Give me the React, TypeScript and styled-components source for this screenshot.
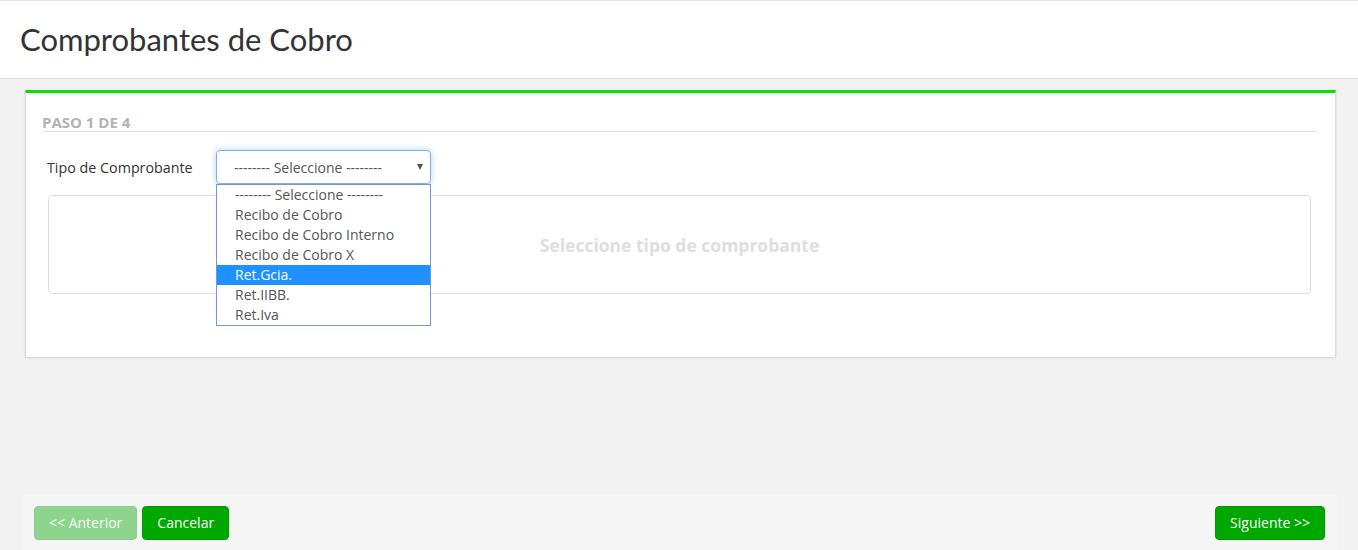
import React from 'react'
import styled, { createGlobalStyle } from 'styled-components'

const GlobalStyle = createGlobalStyle`
  html, body {
    margin: 0;
    padding: 0;
    background: #f2f2f2;
    font-family: "Open Sans", "Liberation Sans", sans-serif;
    color: #333;
  }
  * { box-sizing: border-box; }
`

const Page = styled.div`
  display: flex;
  flex-direction: column;
  min-height: 100vh;
`

const Header = styled.header`
  height: 79px;
  background: #fff;
  border-top: 1px solid #e6e6e6;
  border-bottom: 1px solid #e0e0e0;
  display: flex;
  align-items: center;
  padding: 0 20px;
`

const Title = styled.h1`
  margin: 0 0 1px;
  font-family: Lato, "Open Sans", sans-serif;
  font-weight: 400;
  font-size: 31px;
  color: #333;
`

const Card = styled.section`
  margin: 11px 22px 0 25px;
  background: #fff;
  border-top: 3px solid #00e400;
  border-left: 1px solid #dcdcdc;
  border-right: 1px solid #dcdcdc;
  box-shadow: 0 1px 2px rgba(0, 0, 0, 0.12);
  padding: 20px 17px 63px 16px;
`

const StepTitle = styled.h3`
  margin: 0;
  height: 19px;
  font-size: 15px;
  line-height: 18px;
  font-weight: 700;
  color: #b3b3b3;
  border-bottom: 1px solid #e5e5e5;
`

const Form = styled.div`
  padding: 18px 7px 0 6px;
`

const FieldRow = styled.div`
  display: flex;
  align-items: center;
  position: relative;
  z-index: 2;
`

const Label = styled.label`
  width: 169px;
  margin-left: -1px;
  font-size: 14.3px;
  color: #333;
`

const SelectWrap = styled.div`
  position: relative;
  width: 215px;
`

const SelectBox = styled.div`
  height: 34px;
  border: 1px solid #7fb2e6;
  border-radius: 4px;
  box-shadow: 0 0 6px rgba(102, 175, 233, 0.55);
  display: flex;
  align-items: center;
  justify-content: space-between;
  padding: 0 7px 0 17px;
  font-size: 14px;
  color: #555;
  background: #fff;
`

const Caret = styled.span`
  width: 0;
  height: 0;
  border-left: 3.5px solid transparent;
  border-right: 3.5px solid transparent;
  border-top: 6px solid #555;
  margin-top: -1px;
`

const OptionList = styled.ul`
  position: absolute;
  top: 100%;
  left: 0;
  width: 100%;
  margin: 0;
  padding: 0;
  list-style: none;
  background: #fff;
  border: 1px solid #6f98dc;
`

const Option = styled.li<{ active?: boolean }>`
  height: 20px;
  line-height: 20px;
  padding-left: 18px;
  font-size: 14px;
  color: ${({ active }) => (active ? '#fff' : '#555')};
  background: ${({ active }) => (active ? '#1e90ff' : 'transparent')};
  white-space: nowrap;
`

const EmptyBox = styled.div`
  margin-top: 11px;
  height: 99px;
  border: 1px solid #dedede;
  border-radius: 4px;
  display: flex;
  align-items: center;
  justify-content: center;
  font-size: 17.5px;
  font-weight: 700;
  color: #dedede;
`

const Footer = styled.footer`
  margin: auto 21px 0 22px;
  height: 55px;
  background: #f5f5f5;
  display: flex;
  align-items: flex-start;
  padding: 11px 12px 0 12px;
`

const ButtonGroup = styled.div`
  display: flex;
  gap: 5px;
`

const Button = styled.button<{ disabled?: boolean }>`
  height: 34px;
  padding: 6px 14px;
  font-family: "Open Sans", "Liberation Sans", sans-serif;
  font-size: 14px;
  line-height: 20px;
  color: #fff;
  background: #00a800;
  border: 1px solid #009a00;
  border-radius: 4px;
  opacity: ${({ disabled }) => (disabled ? 0.42 : 1)};
  cursor: ${({ disabled }) => (disabled ? 'not-allowed' : 'pointer')};
`

const Spacer = styled.div`
  flex: 1;
`

const options = [
  '-------- Seleccione --------',
  'Recibo de Cobro',
  'Recibo de Cobro Interno',
  'Recibo de Cobro X',
  'Ret.Gcia.',
  'Ret.IIBB.',
  'Ret.Iva',
]

export default function App() {
  return (
    <Page>
      <GlobalStyle />
      <Header>
        <Title>Comprobantes de Cobro</Title>
      </Header>
      <Card>
        <StepTitle>PASO 1 DE 4</StepTitle>
        <Form>
          <FieldRow>
            <Label>Tipo de Comprobante</Label>
            <SelectWrap>
              <SelectBox>
                <span>-------- Seleccione --------</span>
                <Caret />
              </SelectBox>
              <OptionList>
                {options.map((o) => (
                  <Option key={o} active={o === 'Ret.Gcia.'}>
                    {o}
                  </Option>
                ))}
              </OptionList>
            </SelectWrap>
          </FieldRow>
          <EmptyBox>Seleccione tipo de comprobante</EmptyBox>
        </Form>
      </Card>
      <Footer>
        <ButtonGroup>
          <Button disabled>&lt;&lt; Anterior</Button>
          <Button>Cancelar</Button>
        </ButtonGroup>
        <Spacer />
        <Button>Siguiente &gt;&gt;</Button>
      </Footer>
    </Page>
  )
}
